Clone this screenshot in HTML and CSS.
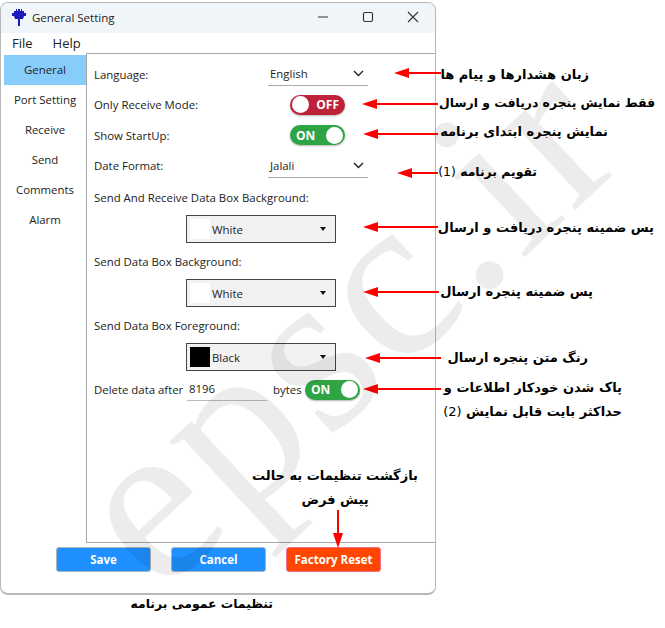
FILE: index.html
```html
<!DOCTYPE html>
<html lang="en">
<head>
    <meta charset="UTF-8">
    <meta name="viewport" content="width=device-width, initial-scale=1.0">
    <title>General Setting</title>
    <link rel="stylesheet" href="styles.css">
</head>
<body>
    <div class="canvas">
        <div class="window">
            <div class="titlebar">
                <svg class="app-icon" width="16" height="17" viewBox="0 0 16 17">
                    <path d="M3 2h2V0h1v2h1V0h2v2h1V0h1v2h2v2h2v3h-2l-1 3H9v7H7v-7H4L3 7H1V4h2z" fill="#1a1ab8"/>
                </svg>
                <span class="title">General Setting</span>
                <div class="caption-buttons">
                    <svg width="12" height="12" viewBox="0 0 12 12"><path d="M1 6h10" stroke="#333" stroke-width="1.2"/></svg>
                    <svg width="12" height="12" viewBox="0 0 12 12"><rect x="1.5" y="1.5" width="9" height="9" rx="1.5" fill="none" stroke="#333" stroke-width="1.2"/></svg>
                    <svg width="12" height="12" viewBox="0 0 12 12"><path d="M1 1l10 10M11 1L1 11" stroke="#333" stroke-width="1.1"/></svg>
                </div>
            </div>

            <div class="menubar">
                <span>File</span>
                <span>Help</span>
            </div>

            <div class="main">
                <div class="sidenav">
                    <div class="nav-item active">General</div>
                    <div class="nav-item">Port Setting</div>
                    <div class="nav-item">Receive</div>
                    <div class="nav-item">Send</div>
                    <div class="nav-item">Comments</div>
                    <div class="nav-item">Alarm</div>
                </div>

                <div class="panel">
                    <div class="row">
                        <span class="label">Language:</span>
                        <div class="select"><span>English</span><svg width="11" height="7" viewBox="0 0 11 7"><path d="M1 1l4.5 4.5L10 1" fill="none" stroke="#222" stroke-width="1.4"/></svg></div>
                    </div>
                    <div class="row">
                        <span class="label">Only Receive Mode:</span>
                        <div class="toggle toggle-off toggle-wide"><i></i><b>OFF</b></div>
                    </div>
                    <div class="row">
                        <span class="label">Show StartUp:</span>
                        <div class="toggle toggle-on toggle-wide"><b>ON</b><i></i></div>
                    </div>
                    <div class="row">
                        <span class="label">Date Format:</span>
                        <div class="select"><span>Jalali</span><svg width="11" height="7" viewBox="0 0 11 7"><path d="M1 1l4.5 4.5L10 1" fill="none" stroke="#222" stroke-width="1.4"/></svg></div>
                    </div>

                    <div class="group-label group-first">Send And Receive Data Box Background:</div>
                    <div class="combo"><span class="swatch swatch-white"></span><span>White</span><span class="caret"></span></div>

                    <div class="group-label">Send Data Box Background:</div>
                    <div class="combo"><span class="swatch swatch-white"></span><span>White</span><span class="caret"></span></div>

                    <div class="group-label">Send Data Box Foreground:</div>
                    <div class="combo"><span class="swatch swatch-black"></span><span>Black</span><span class="caret"></span></div>

                    <div class="delete-row">
                        <span class="label delete-label">Delete data after</span>
                        <div class="number-input">8196</div>
                        <span class="bytes">bytes</span>
                        <div class="toggle toggle-on"><b>ON</b><i></i></div>
                    </div>
                </div>
            </div>

            <div class="footer">
                <button class="btn btn-blue">Save</button>
                <button class="btn btn-blue">Cancel</button>
                <button class="btn btn-red">Factory Reset</button>
            </div>
        </div>

        <!-- annotations on top of the screenshot -->
        <svg class="arrows" width="665" height="628" viewBox="0 0 665 628">
            <g stroke="#f00" stroke-width="2" fill="#f00">
                <path d="M441 73H405"/><path d="M394 73l15-5v10z" stroke="none"/>
                <path d="M438 104H372"/><path d="M362 104l15-5v10z" stroke="none"/>
                <path d="M438 134H373"/><path d="M363 134l15-5v10z" stroke="none"/>
                <path d="M438 173H407"/><path d="M397 173l15-5v10z" stroke="none"/>
                <path d="M438 227H373"/><path d="M363 227l15-5v10z" stroke="none"/>
                <path d="M439 292H373"/><path d="M363 292l15-5v10z" stroke="none"/>
                <path d="M441 358H375"/><path d="M365 358l15-5v10z" stroke="none"/>
                <path d="M441 389H373"/><path d="M363 389l15-5v10z" stroke="none"/>
                <path d="M338 510V537"/><path d="M338 548l-5-15h10z" stroke="none"/>
            </g>
        </svg>

        <div class="note note-1" dir="rtl">زبان هشدارها و پیام ها</div>
        <div class="note note-2" dir="rtl">فقط نمایش پنجره دریافت و ارسال</div>
        <div class="note note-3" dir="rtl">نمایش پنجره ابتدای برنامه</div>
        <div class="note note-4" dir="rtl">تقویم برنامه <span class="num">(1)</span></div>
        <div class="note note-5" dir="rtl">پس ضمینه پنجره دریافت و ارسال</div>
        <div class="note note-6" dir="rtl">پس ضمینه پنجره ارسال</div>
        <div class="note note-7" dir="rtl">رنگ متن پنجره ارسال</div>
        <div class="note note-8" dir="rtl">پاک شدن خودکار اطلاعات و<br>حداکثر بایت قابل نمایش <span class="num">(2)</span></div>
        <div class="note note-9" dir="rtl">بازگشت تنظیمات به حالت<br>پیش فرض</div>
        <div class="note note-10" dir="rtl">تنظیمات عمومی برنامه</div>

        <div class="watermark">epsc.ir</div>
    </div>
</body>
</html>
```

FILE: styles.css
```css
body {
    margin: 0;
    background: white;
    font-family: 'Open Sans', 'Noto Sans', sans-serif;
    color: #222;
    overflow: hidden;
}

.canvas {
    position: relative;
    width: 665px;
    height: 628px;
    overflow: hidden;
}

.window {
    position: absolute;
    left: 0;
    top: 2px;
    width: 434px;
    height: 590px;
    border: 1px solid #b8b8b8;
    border-bottom-width: 2px;
    border-radius: 8px;
    background: white;
    display: flex;
    flex-direction: column;
    overflow: hidden;
}

.titlebar {
    height: 30px;
    background: #eff5f9;
    display: flex;
    align-items: center;
    padding: 0 0 2px 10px;
    box-sizing: border-box;
    flex-shrink: 0;
}

.app-icon {
    margin-right: 5px;
}

.title {
    font-size: 11.5px;
    color: #222;
}

.caption-buttons {
    margin-left: auto;
    display: flex;
    gap: 33px;
    padding-right: 16px;
}

.menubar {
    height: 20px;
    display: flex;
    gap: 20px;
    padding-left: 11px;
    align-items: center;
    font-size: 13px;
    flex-shrink: 0;
}

.main {
    display: flex;
    height: 490px;
    flex-shrink: 0;
}

.sidenav {
    width: 82px;
    margin-left: 3px;
    padding-top: 2px;
    flex-shrink: 0;
}

.nav-item {
    height: 30px;
    line-height: 30px;
    text-align: center;
    font-size: 11.4px;
}

.nav-item.active {
    background: #87cdfb;
}

.panel {
    flex: 1;
    border: 1px solid #a8a8a8;
    border-right: none;
    padding: 5px 0 0 7px;
}

.row {
    height: 30.5px;
    display: flex;
    align-items: center;
    position: relative;
}

.label,
.group-label {
    font-size: 11.4px;
}

.select {
    position: absolute;
    left: 174px;
    top: 0;
    width: 100px;
    height: 27px;
    padding: 3px 4px 0 2px;
    border-bottom: 1px solid #aaa;
    box-sizing: border-box;
    display: flex;
    align-items: center;
    justify-content: space-between;
    font-size: 11.4px;
}

.toggle {
    width: 55px;
    height: 20px;
    border-radius: 10px;
    display: flex;
    align-items: center;
    justify-content: space-between;
    padding: 0 2px;
    box-sizing: border-box;
    font-size: 12px;
    color: white;
    box-shadow: 0 1px 2px rgba(0, 0, 0, 0.3);
}

.toggle-wide {
    position: absolute;
    left: 196px;
    top: 5px;
}

.toggle i {
    width: 17px;
    height: 17px;
    border-radius: 50%;
    background: white;
}

.toggle b {
    font-weight: 700;
}

.toggle-off {
    background: #be2239;
    padding-right: 6px;
}

.toggle-on {
    background: #2fa445;
    padding-left: 6px;
}

.group-label {
    height: 16px;
    line-height: 16px;
    margin-top: 11px;
}

.group-label.group-first {
    margin-top: 9px;
}

.combo {
    width: 150px;
    height: 28px;
    margin: 9px 0 0 92px;
    border: 1px solid #444;
    box-sizing: border-box;
    background: #f2f2f2;
    display: flex;
    align-items: center;
    padding: 0 9px 0 3px;
    font-size: 11.4px;
}

.swatch {
    width: 20px;
    height: 20px;
    margin-right: 2px;
}

.swatch-white {
    background: white;
}

.swatch-black {
    background: black;
}

.caret {
    margin-left: auto;
    width: 0;
    height: 0;
    border-left: 3.5px solid transparent;
    border-right: 3.5px solid transparent;
    border-top: 4px solid #111;
}

.delete-row {
    display: flex;
    align-items: center;
    margin-top: 8px;
    height: 21px;
}

.delete-label {
    width: 93px;
    white-space: nowrap;
}

.number-input {
    width: 80px;
    height: 23px;
    line-height: 22px;
    padding-left: 2px;
    box-sizing: border-box;
    border-bottom: 1px solid #bbb;
    font-size: 11.4px;
}

.bytes {
    width: 32px;
    font-size: 11.4px;
    margin-left: 6px;
}

.footer {
    display: flex;
    gap: 20px;
    padding: 4px 0 0 55px;
}

.btn {
    width: 95px;
    height: 25px;
    border: 1px solid #a9b4be;
    border-radius: 3px;
    color: white;
    font-family: 'Open Sans', sans-serif;
    font-size: 11.5px;
    font-weight: 700;
    padding: 0;
}

.btn-blue {
    background: #1e90ff;
}

.btn-red {
    background: #ff4500;
    border-color: #f0708a;
}

.arrows {
    position: absolute;
    left: 0;
    top: 0;
}

.note {
    position: absolute;
    font-family: 'DejaVu Sans', sans-serif;
    font-size: 13px;
    font-weight: 700;
    color: black;
    white-space: nowrap;
    line-height: 24px;
}

.num {
    font-weight: 400;
}

.note-1 { right: 76px; top: 63px; }
.note-2 { right: 10px; top: 91px; font-size: 12.4px; }
.note-3 { right: 57px; top: 120px; }
.note-4 { right: 128px; top: 160px; font-size: 12.4px; }
.note-5 { right: 11px; top: 216px; }
.note-6 { right: 72px; top: 280px; }
.note-7 { right: 77px; top: 346px; }
.note-8 { right: 43px; top: 376px; }
.note-9 { left: 250px; width: 170px; top: 464px; text-align: center; }
.note-10 { right: 392px; top: 592px; font-size: 12.4px; }

.watermark {
    position: absolute;
    left: 26px;
    top: 454px;
    font-family: 'Liberation Serif', serif;
    font-size: 234px;
    line-height: 234px;
    letter-spacing: 4px;
    color: rgba(0, 0, 0, 0.075);
    transform-origin: 0 0;
    transform: rotate(-43deg);
    white-space: nowrap;
    pointer-events: none;
}
```
